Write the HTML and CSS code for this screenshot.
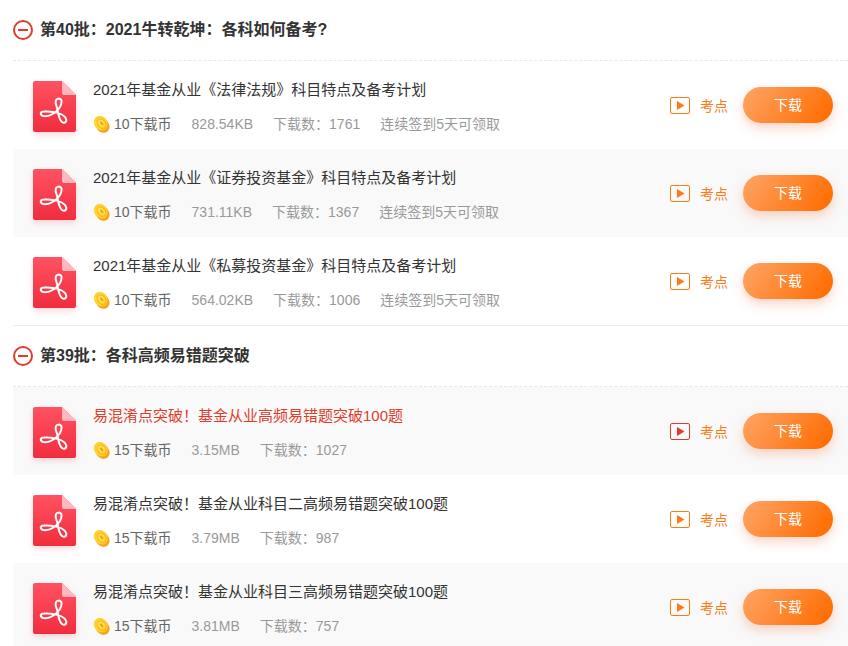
FILE: index.html
```html
<!DOCTYPE html>
<html lang="zh-CN">
<head>
<meta charset="utf-8">
<meta name="viewport" content="width=device-width, initial-scale=1">
<title>资料下载</title>
<link rel="stylesheet" href="styles.css">
</head>
<body>
<svg class="sprite" aria-hidden="true">
  <defs>
    <linearGradient id="red" x1="0" y1="0" x2="0" y2="1"><stop offset="0" stop-color="#ff5261"/><stop offset="1" stop-color="#f02d3d"/></linearGradient>
    <linearGradient id="gold" x1="0" y1="0" x2="1" y2="1"><stop offset="0" stop-color="#ffd83e"/><stop offset="1" stop-color="#ffc52a"/></linearGradient>
    <symbol id="pdf" viewBox="0 0 43 52">
      <path fill="url(#red)" d="M2 0H29L43 14V49a2 2 0 0 1-2 2H2a2 2 0 0 1-2-2V2a2 2 0 0 1 2-2z"/>
      <path fill="#ffb9be" d="M29 0L43 14H31a2 2 0 0 1-2-2z"/>
      <path fill="none" stroke="#fff" stroke-width="2" stroke-linejoin="round" d="M23.500 25C21.500 20 23 17.500 26 17.500C29.500 18 29 22 27 26C24 31 17 36 10.500 35C6.500 34 7 30.500 11 30.500C17 30 28 31.500 32 36C35 40 32 43.500 29 41C25 37.500 25.500 31 23.500 25z"/>
    </symbol>
    <symbol id="coin" viewBox="0 0 17 17">
      <ellipse cx="9.500" cy="9.500" rx="6.500" ry="7.800" transform="rotate(-40 9.500 9.500)" fill="#ff9f16"/>
      <ellipse cx="7.800" cy="7.300" rx="6.500" ry="7.800" transform="rotate(-40 7.800 7.300)" fill="url(#gold)"/>
      <ellipse cx="8.500" cy="7.500" rx="3.800" ry="5" transform="rotate(-40 8.500 7.500)" fill="#ffe04c" stroke="#fdb414"/>
      <path d="M7.500 6l2.500 3" stroke="#f8a400" stroke-width="2"/>
    </symbol>
    <symbol id="play" viewBox="0 0 20 17">
      <rect x=".5" y=".5" width="19" height="16" rx="1.500" fill="none" stroke="currentColor"/>
      <path d="M7 4v9l7.500-4.500z" fill="currentColor"/>
    </symbol>
    <symbol id="minus" viewBox="0 0 20 20">
      <circle cx="10" cy="10" r="9" fill="none" stroke="currentColor" stroke-width="2"/>
      <path d="M5 10h10" stroke="currentColor" stroke-width="2"/>
    </symbol>
  </defs>
</svg>
<main class="list">
  <section class="batch">
    <h2 class="batch-head"><button class="toggle" type="button" aria-label="收起"><svg><use href="#minus"/></svg></button>第40批：2021牛转乾坤：各科如何备考?</h2>
    <article class="item">
      <svg class="pdf"><use href="#pdf"/></svg>
      <div class="info">
        <h3 class="title">2021年基金从业《法律法规》科目特点及备考计划</h3>
        <p class="meta"><span class="price"><svg class="coin"><use href="#coin"/></svg>10下载币</span><span>828.54KB</span><span>下载数：1761</span><span>连续签到5天可领取</span></p>
      </div>
      <a class="point" href="#"><svg class="play"><use href="#play"/></svg>考点</a>
      <button class="download" type="button">下载</button>
    </article>
    <article class="item shaded">
      <svg class="pdf"><use href="#pdf"/></svg>
      <div class="info">
        <h3 class="title">2021年基金从业《证券投资基金》科目特点及备考计划</h3>
        <p class="meta"><span class="price"><svg class="coin"><use href="#coin"/></svg>10下载币</span><span>731.11KB</span><span>下载数：1367</span><span>连续签到5天可领取</span></p>
      </div>
      <a class="point" href="#"><svg class="play"><use href="#play"/></svg>考点</a>
      <button class="download" type="button">下载</button>
    </article>
    <article class="item">
      <svg class="pdf"><use href="#pdf"/></svg>
      <div class="info">
        <h3 class="title">2021年基金从业《私募投资基金》科目特点及备考计划</h3>
        <p class="meta"><span class="price"><svg class="coin"><use href="#coin"/></svg>10下载币</span><span>564.02KB</span><span>下载数：1006</span><span>连续签到5天可领取</span></p>
      </div>
      <a class="point" href="#"><svg class="play"><use href="#play"/></svg>考点</a>
      <button class="download" type="button">下载</button>
    </article>
  </section>
  <section class="batch">
    <h2 class="batch-head"><button class="toggle" type="button" aria-label="收起"><svg><use href="#minus"/></svg></button>第39批：各科高频易错题突破</h2>
    <article class="item shaded active">
      <svg class="pdf"><use href="#pdf"/></svg>
      <div class="info">
        <h3 class="title">易混淆点突破！基金从业高频易错题突破100题</h3>
        <p class="meta"><span class="price"><svg class="coin"><use href="#coin"/></svg>15下载币</span><span>3.15MB</span><span>下载数：1027</span></p>
      </div>
      <a class="point" href="#"><svg class="play"><use href="#play"/></svg>考点</a>
      <button class="download" type="button">下载</button>
    </article>
    <article class="item">
      <svg class="pdf"><use href="#pdf"/></svg>
      <div class="info">
        <h3 class="title">易混淆点突破！基金从业科目二高频易错题突破100题</h3>
        <p class="meta"><span class="price"><svg class="coin"><use href="#coin"/></svg>15下载币</span><span>3.79MB</span><span>下载数：987</span></p>
      </div>
      <a class="point" href="#"><svg class="play"><use href="#play"/></svg>考点</a>
      <button class="download" type="button">下载</button>
    </article>
    <article class="item shaded">
      <svg class="pdf"><use href="#pdf"/></svg>
      <div class="info">
        <h3 class="title">易混淆点突破！基金从业科目三高频易错题突破100题</h3>
        <p class="meta"><span class="price"><svg class="coin"><use href="#coin"/></svg>15下载币</span><span>3.81MB</span><span>下载数：757</span></p>
      </div>
      <a class="point" href="#"><svg class="play"><use href="#play"/></svg>考点</a>
      <button class="download" type="button">下载</button>
    </article>
  </section>
</main>
</body>
</html>
```

FILE: styles.css
```css
* { box-sizing: border-box; }
body {
  margin: 0;
  height: 100vh;
  overflow: hidden;
  background: #fff;
  color: #333;
  font-family: "Liberation Sans", "Noto Sans CJK SC", sans-serif;
}
h2, h3, p { margin: 0; }
button { border: 0; padding: 0; font-family: inherit; cursor: pointer; }
svg { display: block; flex: none; }
.sprite { position: absolute; width: 0; height: 0; }
.list { padding-left: 13px; }
.batch + .batch { border-top: 1px solid #eee; }
.batch-head {
  display: flex;
  align-items: center;
  gap: 7px;
  height: 61px;
  border-bottom: 1px dashed #e8e8e8;
  font-size: 16px;
  line-height: 24px;
}
.toggle { background: none; color: #e03c2d; }
.toggle svg { width: 20px; height: 20px; }
.item {
  display: flex;
  align-items: center;
  height: 88px;
  padding: 0 15px 0 20px;
}
.shaded { background: #f9f9f9; }
.pdf {
  width: 43px;
  height: 52px;
  margin: 4px 17px 0 0;
  filter: drop-shadow(0 3px 3px rgba(240, 45, 61, .18));
}
.info { flex: 1; min-width: 0; padding-top: 4px; }
.title {
  margin-bottom: 10px;
  font-size: 15px;
  font-weight: 400;
  line-height: 24px;
  white-space: nowrap;
}
.active .title { color: #e03c2d; }
.meta {
  display: flex;
  gap: 20px;
  color: #999;
  font-size: 14px;
  line-height: 24px;
  white-space: nowrap;
}
.price { display: flex; align-items: center; gap: 4px; color: #666; }
.coin { width: 17px; height: 17px; }
.point {
  display: flex;
  align-items: center;
  gap: 10px;
  margin-right: 15px;
  color: #ff7a14;
  font-size: 14px;
  text-decoration: none;
}
.play { width: 20px; height: 17px; }
.active .play { color: #e03c2d; }
.download {
  width: 90px;
  height: 36px;
  padding-bottom: 2px;
  border-radius: 18px;
  background: linear-gradient(125deg, #ff9f5c 10%, #ff6f05 90%);
  box-shadow: 0 5px 12px rgba(240, 100, 50, .28);
  color: #fff;
  font-size: 14px;
}
```
